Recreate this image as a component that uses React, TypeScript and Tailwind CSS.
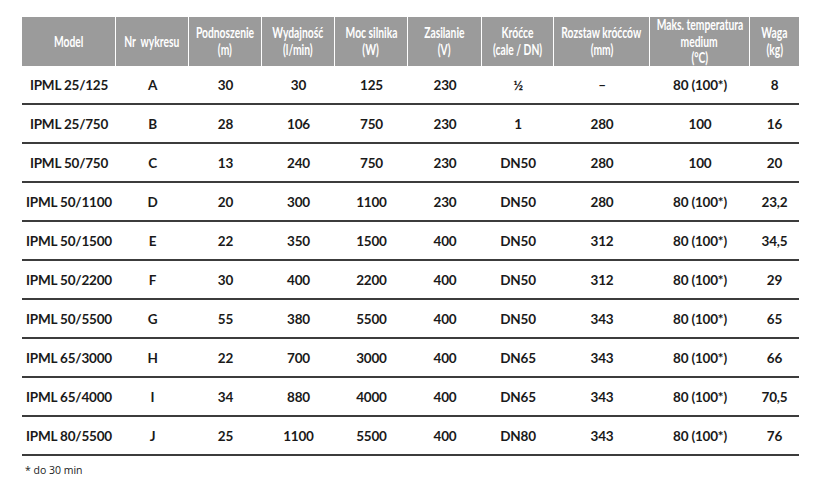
import React from "react";

const headers: string[][] = [
  ["Model"],
  ["Nr  wykresu"],
  ["Podnoszenie", "(m)"],
  ["Wydajność", "(l/min)"],
  ["Moc silnika", "(W)"],
  ["Zasilanie", "(V)"],
  ["Króćce", "(cale / DN)"],
  ["Rozstaw króćców", "(mm)"],
  ["Maks. temperatura", "medium", "(°C)"],
  ["Waga", "(kg)"],
];

const rows: string[][] = [
  ["IPML 25/125", "A", "30", "30", "125", "230", "½", "–", "80 (100*)", "8"],
  ["IPML 25/750", "B", "28", "106", "750", "230", "1", "280", "100", "16"],
  ["IPML 50/750", "C", "13", "240", "750", "230", "DN50", "280", "100", "20"],
  ["IPML 50/1100", "D", "20", "300", "1100", "230", "DN50", "280", "80 (100*)", "23,2"],
  ["IPML 50/1500", "E", "22", "350", "1500", "400", "DN50", "312", "80 (100*)", "34,5"],
  ["IPML 50/2200", "F", "30", "400", "2200", "400", "DN50", "312", "80 (100*)", "29"],
  ["IPML 50/5500", "G", "55", "380", "5500", "400", "DN50", "343", "80 (100*)", "65"],
  ["IPML 65/3000", "H", "22", "700", "3000", "400", "DN65", "343", "80 (100*)", "66"],
  ["IPML 65/4000", "I", "34", "880", "4000", "400", "DN65", "343", "80 (100*)", "70,5"],
  ["IPML 80/5500", "J", "25", "1100", "5500", "400", "DN80", "343", "80 (100*)", "76"],
];

const cols = "grid grid-cols-[94px_73px_73px_73px_73px_74px_72px_96px_100px_49px]";

export default function App() {
  return (
    <div className="w-[834px] h-[480px] bg-white pt-[17px] pl-[22px]">
      <div className="w-[777px]">
        <div className={`${cols} h-[49px] bg-[#9b9b9b]`}>
          {headers.map((h, i) => (
            <div
              key={i}
              className={`flex flex-col items-center justify-center text-white font-bold text-[14.5px] leading-[16.5px] ${i < headers.length - 1 ? "border-r border-white" : ""}`}
              style={{ fontFamily: 'Lato, "Open Sans", sans-serif' }}
            >
              {h.map((l, j) => (
                <span key={j} className="whitespace-pre inline-block scale-x-[0.71]">{l}</span>
              ))}
            </div>
          ))}
        </div>
        {rows.map((r, i) => (
          <div key={i} className={`${cols} h-[39px] border-b-2 border-[#3c3c3c]`}>
            {r.map((c, j) => (
              <div
                key={j}
                className="flex items-center justify-center font-bold text-[13.5px] text-[#1a1a1a] pt-[1px] tracking-[-0.2px]"
                style={{ fontFamily: 'Lato, "Open Sans", sans-serif' }}
              >
                {c}
              </div>
            ))}
          </div>
        ))}
        <div
          className="mt-[7px] ml-[3px] text-[10.5px] text-[#222]"
          style={{ fontFamily: '"Open Sans", Lato, sans-serif' }}
        >
          * do 30 min
        </div>
      </div>
    </div>
  );
}
